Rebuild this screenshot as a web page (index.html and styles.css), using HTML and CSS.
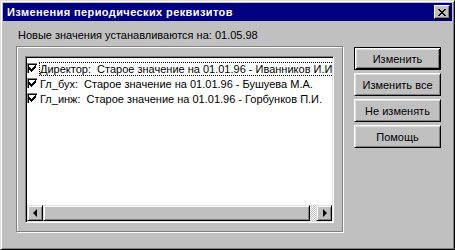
FILE: index.html
```html
<!DOCTYPE html>
<html lang="ru">
<head>
  <meta charset="UTF-8">
  <title>Изменения периодических реквизитов</title>
  <link rel="stylesheet" href="styles.css">
</head>
<body>
  <div class="window">
    <!-- Title bar -->
    <div class="titlebar">
      <span class="title">Изменения периодических реквизитов</span>
      <button class="close-btn" aria-label="Закрыть">
        <svg width="8" height="7" viewBox="0 0 8 7" shape-rendering="crispEdges">
          <path d="M0 0h2v1H0zM6 0h2v1H6zM1 1h2v1H1zM5 1h2v1H5zM2 2h4v1H2zM3 3h2v1H3zM2 4h4v1H2zM1 5h2v1H1zM5 5h2v1H5zM0 6h2v1H0zM6 6h2v1H6z" fill="#000"/>
        </svg>
      </button>
    </div>

    <div class="dialog">
      <div class="left-col">
        <div class="date-label">Новые значения устанавливаются на: 01.05.98</div>

        <div class="group">
          <div class="listbox">
            <div class="items">
              <div class="item">
                <span class="check"><svg width="11" height="11" viewBox="0 0 11 11" shape-rendering="crispEdges"><path d="M0 0h11v1H0zM0 0h1v11H0z" fill="#808080"/><path d="M10 0h1v11h-1zM0 10h11v1H0z" fill="#fff"/><path d="M1 1h9v1H1zM1 1h1v9H1z" fill="#000"/><path d="M2 4h1v3H2zM3 5h1v3H3zM4 6h1v3H4zM5 5h1v3H5zM6 4h1v3H6zM7 3h1v3H7zM8 2h1v3H8z" fill="#000"/></svg></span>
                <span class="item-text focused">Директор:  Старое значение на 01.01.96 - Иванников И.И.</span>
              </div>
              <div class="item">
                <span class="check"><svg width="11" height="11" viewBox="0 0 11 11" shape-rendering="crispEdges"><path d="M0 0h11v1H0zM0 0h1v11H0z" fill="#808080"/><path d="M10 0h1v11h-1zM0 10h11v1H0z" fill="#fff"/><path d="M1 1h9v1H1zM1 1h1v9H1z" fill="#000"/><path d="M2 4h1v3H2zM3 5h1v3H3zM4 6h1v3H4zM5 5h1v3H5zM6 4h1v3H6zM7 3h1v3H7zM8 2h1v3H8z" fill="#000"/></svg></span>
                <span class="item-text">Гл_бух:  Старое значение на 01.01.96 - Бушуева М.А.</span>
              </div>
              <div class="item">
                <span class="check"><svg width="11" height="11" viewBox="0 0 11 11" shape-rendering="crispEdges"><path d="M0 0h11v1H0zM0 0h1v11H0z" fill="#808080"/><path d="M10 0h1v11h-1zM0 10h11v1H0z" fill="#fff"/><path d="M1 1h9v1H1zM1 1h1v9H1z" fill="#000"/><path d="M2 4h1v3H2zM3 5h1v3H3zM4 6h1v3H4zM5 5h1v3H5zM6 4h1v3H6zM7 3h1v3H7zM8 2h1v3H8z" fill="#000"/></svg></span>
                <span class="item-text">Гл_инж:  Старое значение на 01.01.96 - Горбунков П.И.</span>
              </div>
            </div>

            <!-- Horizontal scrollbar -->
            <div class="hscroll">
              <span class="arrow-btn arrow-left"></span>
              <span class="thumb"></span>
              <span class="track"></span>
              <span class="arrow-btn arrow-right"></span>
            </div>
          </div>
        </div>
      </div>

      <div class="buttons">
        <button class="btn btn-default">Изменить</button>
        <button class="btn">Изменить все</button>
        <button class="btn">Не изменять</button>
        <button class="btn">Помощь</button>
      </div>
    </div>
  </div>
</body>
</html>
```

FILE: styles.css
```css
:root {
  --face: #c0c0c0;
  --light: #dfdfdf;
  --shadow: #808080;
  --navy: #000080;
}

* {
  margin: 0;
  padding: 0;
  box-sizing: border-box;
}

body {
  background: var(--face);
  font-family: "Liberation Sans", Arial, sans-serif;
  font-size: 11px;
  color: #000;
}

/* Window frame */
.window {
  width: 455px;
  height: 250px;
  background: var(--face);
  border: 1px solid;
  border-color: var(--light) #000 #000 var(--light);
  box-shadow: inset 1px 1px #fff, inset -1px -1px var(--shadow);
  padding: 2px;
}

/* Title bar */
.titlebar {
  height: 18px;
  background: var(--navy);
  display: flex;
  align-items: center;
  padding: 0 2px 0 4px;
}

.title {
  color: #fff;
  font-weight: 700;
  font-size: 11px;
  letter-spacing: 0.4px;
}

.close-btn {
  margin-left: auto;
  width: 16px;
  height: 14px;
  background: var(--face);
  border: 1px solid;
  border-color: #fff #000 #000 #fff;
  box-shadow: inset -1px -1px var(--shadow);
  display: flex;
  align-items: center;
  justify-content: center;
  padding: 0 1px 0 0;
}

.close-btn svg {
  display: block;
}

/* Dialog body */
.dialog {
  display: flex;
  padding: 8px 0 0 13px;
}

.left-col {
  width: 328px;
}

.date-label {
  padding-left: 2px;
  line-height: 13px;
  height: 13px;
  margin-bottom: 4px;
  white-space: nowrap;
}

/* Etched group frame */
.group {
  width: 327px;
  height: 186px;
  border: 1px solid var(--shadow);
  box-shadow: 1px 1px 0 #fff, inset 1px 1px 0 #fff;
  padding: 9px 8px 8px 8px;
}

/* Sunken list box */
.listbox {
  width: 309px;
  height: 167px;
  background: #fff;
  border: 1px solid;
  border-color: var(--shadow) #fff #fff var(--shadow);
  box-shadow: inset 1px 1px #000, inset -1px -1px var(--light);
  padding: 1px;
  display: flex;
  flex-direction: column;
}

.items {
  flex: 1;
  overflow: hidden;
  padding-top: 3px;
}

.item {
  display: flex;
  align-items: center;
  height: 15px;
  white-space: pre;
}

.check {
  width: 11px;
  height: 11px;
  flex-shrink: 0;
}

.check svg {
  display: block;
}

.item-text {
  margin-left: 1px;
  padding: 0 1px;
  line-height: 14px;
}

.item-text.focused {
  outline: 1px dotted #000;
  outline-offset: -1px;
}

/* Horizontal scrollbar */
.hscroll {
  height: 16px;
  display: flex;
  flex-shrink: 0;
}

.arrow-btn,
.thumb {
  background: var(--face);
  border: 1px solid;
  border-color: var(--light) #000 #000 var(--light);
  box-shadow: inset 1px 1px #fff, inset -1px -1px var(--shadow);
}

.arrow-btn {
  width: 16px;
  display: flex;
  align-items: center;
  justify-content: center;
}

.arrow-btn::before {
  content: "";
  border-top: 4px solid transparent;
  border-bottom: 4px solid transparent;
}

.arrow-left::before {
  border-right: 4px solid #000;
  margin-right: 1px;
}

.arrow-right::before {
  border-left: 4px solid #000;
  margin-left: 1px;
}

.thumb {
  width: 267px;
}

.track {
  flex: 1;
  background: repeating-conic-gradient(var(--face) 0 25%, #fff 0 50%) 0 0 / 2px 2px;
}

/* Command buttons */
.buttons {
  display: flex;
  flex-direction: column;
  gap: 3px;
  margin-left: 10px;
  padding-top: 18px;
}

.btn {
  width: 87px;
  height: 23px;
  background: var(--face);
  border: 1px solid;
  border-color: #fff #000 #000 #fff;
  box-shadow: inset 1px 1px var(--light), inset -1px -1px var(--shadow);
  font-family: "Liberation Sans", Arial, sans-serif;
  font-size: 11px;
  color: #000;
}

.btn-default {
  border: 1px solid #000;
  box-shadow: inset 1px 1px #fff, inset -1px -1px #000, inset 2px 2px var(--light), inset -2px -2px var(--shadow);
}
```
